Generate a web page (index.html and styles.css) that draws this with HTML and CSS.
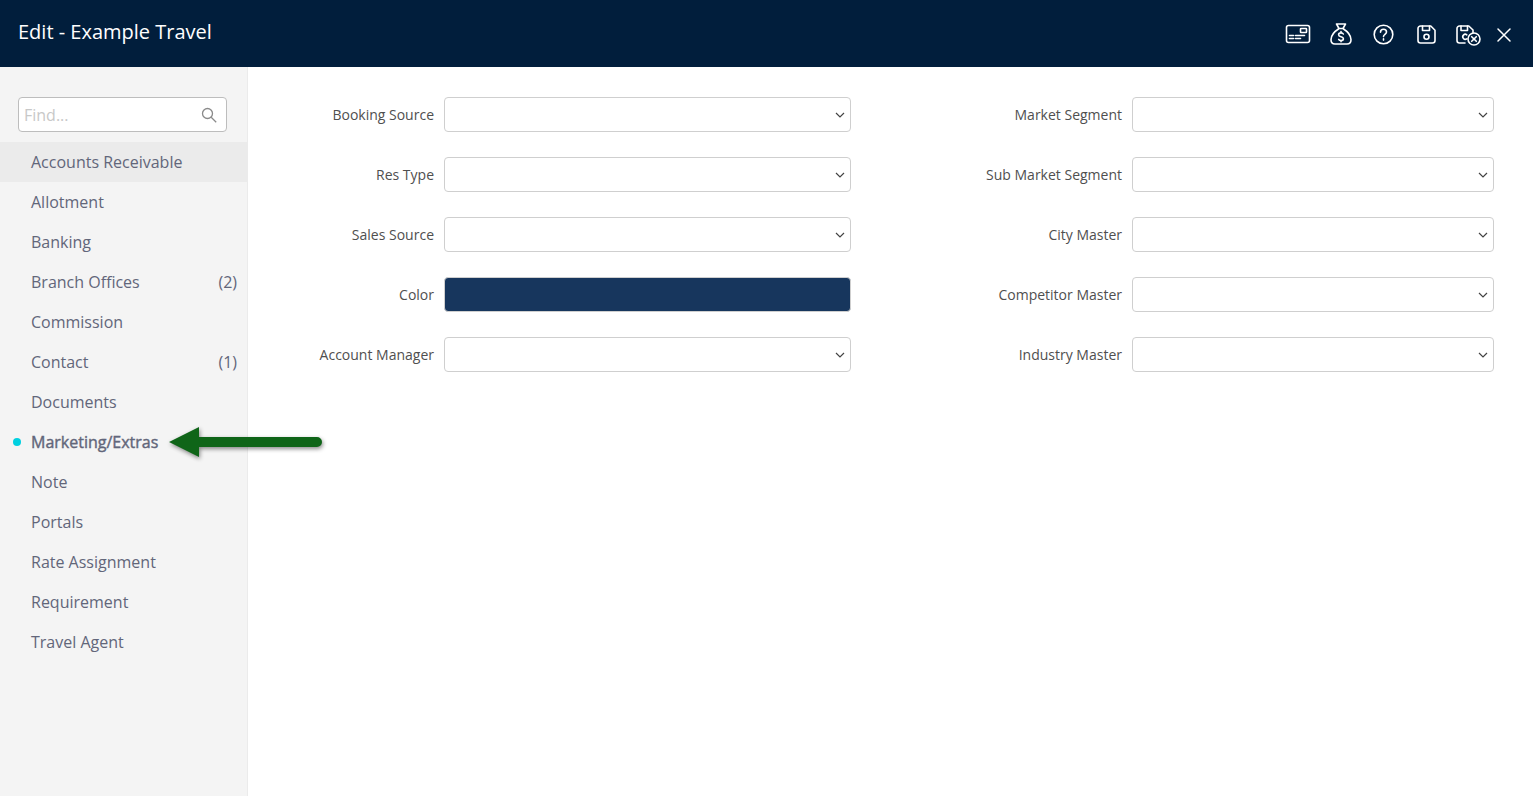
FILE: index.html

```html
<!DOCTYPE html>
<html lang="en">
<head>
    <meta charset="UTF-8">
    <title>Edit - Example Travel</title>
    <meta name="viewport" content="width=device-width, initial-scale=1">
    <link rel="stylesheet" href="styles.css">
</head>
<body>
    <header class="topbar">
        <h1>Edit - Example Travel</h1>
        <div class="actions">
            <svg class="icon icon-card" width="26" height="20" viewBox="0 0 26 20"><rect x="1.500" y="1.500" width="23" height="17" rx="2"/><rect x="15.500" y="4.500" width="6" height="4" rx=".5"/><path d="M4.500 11.500h4M10.500 11.500h9M4.500 14.500h4M10.500 14.500h5"/></svg>
            <svg class="icon icon-bag" width="22" height="22" viewBox="0 0 22 22"><path d="M6.500 1h9l-2.500 4.500H9zM8.500 5.500h5M8.800 5.800C4.500 8.500 1 12.500 1 16.800 1 19.500 2.500 21 5 21h12c2.500 0 4-1.500 4-4.200 0-4.300-3.500-8.300-7.800-11"/><path d="M13.300 11c-.4-.8-1.300-1.100-2.300-1.100-1.300 0-2.400.6-2.400 1.800s1.100 1.700 2.400 2 2.400.8 2.400 2-1.100 1.800-2.400 1.800c-1 0-1.900-.3-2.300-1.100M11 8.600v1.300M11 17.500v1.300"/></svg>
            <svg class="icon icon-help" width="21" height="21" viewBox="0 0 21 21"><circle cx="10.500" cy="10.500" r="9.300"/><path d="M7.500 8.200c0-1.800 1.400-2.900 3-2.900s3 1 3 2.700c0 2.400-3 2.400-3 4.600"/><path d="M10.500 14.900v1.200"/></svg>
            <svg class="icon icon-save" width="19" height="19" viewBox="0 0 19 19"><path d="M3.500 1h10.300l4.200 4.200v10.300a2.500 2.500 0 0 1-2.500 2.500H3.500A2.500 2.500 0 0 1 1 15.500v-12A2.500 2.500 0 0 1 3.500 1z"/><path d="M5.500 1v4.500h7V1"/><circle cx="9.500" cy="11.800" r="2.500"/></svg>
            <svg class="icon icon-save-x" width="25" height="21" viewBox="0 0 25 21"><path d="M9 18H3.500A2.500 2.500 0 0 1 1 15.500v-12A2.500 2.500 0 0 1 3.500 1h9.300L17 5v2.500"/><path d="M5 1v4.500h6.500V1"/><path d="M10.800 9.800a2.500 2.500 0 1 0 0 4"/><circle cx="18" cy="14" r="6"/><path d="M15.700 11.700l4.600 4.600M20.300 11.700l-4.600 4.600"/></svg>
            <svg class="icon icon-close" width="14" height="14" viewBox="0 0 14 14"><path d="M1 1l12 12M13 1L1 13"/></svg>
        </div>
    </header>

    <div class="layout">
        <aside class="sidebar">
            <div class="search">
                <input type="text" placeholder="Find...">
                <svg width="16" height="16" viewBox="0 0 16 16"><circle cx="6.500" cy="6.500" r="5"/><path d="M10.200 10.200l5 5"/></svg>
            </div>
            <ul class="menu">
                <li class="hovered">Accounts Receivable</li>
                <li>Allotment</li>
                <li>Banking</li>
                <li>Branch Offices <span class="count">(2)</span></li>
                <li>Commission</li>
                <li>Contact <span class="count">(1)</span></li>
                <li>Documents</li>
                <li class="active">Marketing/Extras</li>
                <li>Note</li>
                <li>Portals</li>
                <li>Rate Assignment</li>
                <li>Requirement</li>
                <li>Travel Agent</li>
            </ul>
        </aside>

        <main class="content">
            <form class="form-grid">
                <label>Booking Source</label>
                <select></select>
                <label>Market Segment</label>
                <select></select>

                <label>Res Type</label>
                <select></select>
                <label>Sub Market Segment</label>
                <select></select>

                <label>Sales Source</label>
                <select></select>
                <label>City Master</label>
                <select></select>

                <label>Color</label>
                <div class="swatch"></div>
                <label>Competitor Master</label>
                <select></select>

                <label>Account Manager</label>
                <select></select>
                <label>Industry Master</label>
                <select></select>
            </form>
        </main>
    </div>

    <!-- annotation arrow on top of the screenshot -->
    <svg class="arrow" width="160" height="40" viewBox="0 0 160 40">
        <path d="M1 17L31 2V12H149a5 5 0 0 1 0 10H31V32z"/>
    </svg>
</body>
</html>
```

FILE: styles.css

```css
* {
    box-sizing: border-box;
    margin: 0;
    padding: 0;
}
body {
    font-family: 'Open Sans', 'Liberation Sans', sans-serif;
    background: #fff;
    height: 796px;
    overflow: hidden;
    display: flex;
    flex-direction: column;
}
/* Header */
.topbar {
    height: 67px;
    flex-shrink: 0;
    background-color: #011e3c;
    color: #fff;
    display: flex;
    align-items: center;
    justify-content: space-between;
    padding: 0 22px 4px 18px;
}
.topbar h1 {
    font-size: 20px;
    font-weight: 500;
}
.actions {
    display: flex;
    align-items: center;
    gap: 19px;
    padding-top: 5px;
}
.icon {
    fill: none;
    stroke: #fff;
    stroke-width: 1.6;
    stroke-linecap: round;
    stroke-linejoin: round;
}
.icon-help {
    margin-left: 2px;
}
.icon-save {
    margin-left: 4px;
}
.icon-save-x {
    margin-left: 1px;
    margin-top: 2px;
}
.icon-close {
    margin-left: -3px;
    margin-top: 2px;
    stroke-width: 1.5;
}
/* Sidebar */
.layout {
    flex: 1;
    display: flex;
    min-height: 0;
}
.sidebar {
    width: 248px;
    flex-shrink: 0;
    background-color: #f4f4f4;
    border-right: 1px solid #ebebeb;
    padding-top: 30px;
}
.search {
    width: 209px;
    height: 35px;
    margin: 0 0 10px 18px;
    background: #fff;
    border: 1px solid #bdbdbd;
    border-radius: 4px;
    display: flex;
    align-items: center;
    padding: 0 9px 0 5px;
}
.search input {
    flex: 1;
    min-width: 0;
    border: none;
    outline: none;
    background: transparent;
    font-family: inherit;
    font-size: 16px;
}
.search input::placeholder {
    color: #c8c8c8;
    opacity: 1;
}
.search svg {
    fill: none;
    stroke: #8a8a8a;
    stroke-width: 1.3;
}
.menu {
    list-style: none;
}
.menu li {
    position: relative;
    height: 40px;
    display: flex;
    align-items: center;
    justify-content: space-between;
    padding: 0 10px 0 31px;
    font-size: 16px;
    color: #62667a;
}
.menu li.hovered {
    background-color: #ebebeb;
}
.menu li.active {
    -webkit-text-stroke: 0.4px #62667a;
}
.menu li.active::before {
    content: "";
    position: absolute;
    left: 13px;
    top: 16px;
    width: 8px;
    height: 8px;
    border-radius: 50%;
    background-color: #00d0e0;
}
/* Form */
.content {
    flex: 1;
    padding: 30px 0 0 10px;
}
.form-grid {
    display: grid;
    grid-template-columns: 176px 407px 261px 362px;
    grid-auto-rows: 35px;
    column-gap: 10px;
    row-gap: 25px;
    align-items: center;
}
.form-grid label {
    font-size: 14px;
    color: #4f4f4f;
    text-align: right;
}
.form-grid select {
    height: 35px;
    width: 100%;
    appearance: none;
    background-color: #fff;
    background-image: url("data:image/svg+xml,%3Csvg xmlns='http://www.w3.org/2000/svg' width='10' height='6' viewBox='0 0 10 6'%3E%3Cpath d='M1 1l4 4 4-4' fill='none' stroke='%23444' stroke-width='1.200'/%3E%3C/svg%3E");
    background-repeat: no-repeat;
    background-position: right 5px center;
    border: 1px solid #cfcfcf;
    border-radius: 4px;
}
.swatch {
    height: 35px;
    background-color: #17365d;
    border: 1px solid #cfcfcf;
    border-radius: 4px;
}
/* Annotation */
.arrow {
    position: absolute;
    left: 168px;
    top: 425px;
    fill: #0f6518;
    filter: drop-shadow(1px 2px 2px rgba(0,0,0,0.45));
}
```
